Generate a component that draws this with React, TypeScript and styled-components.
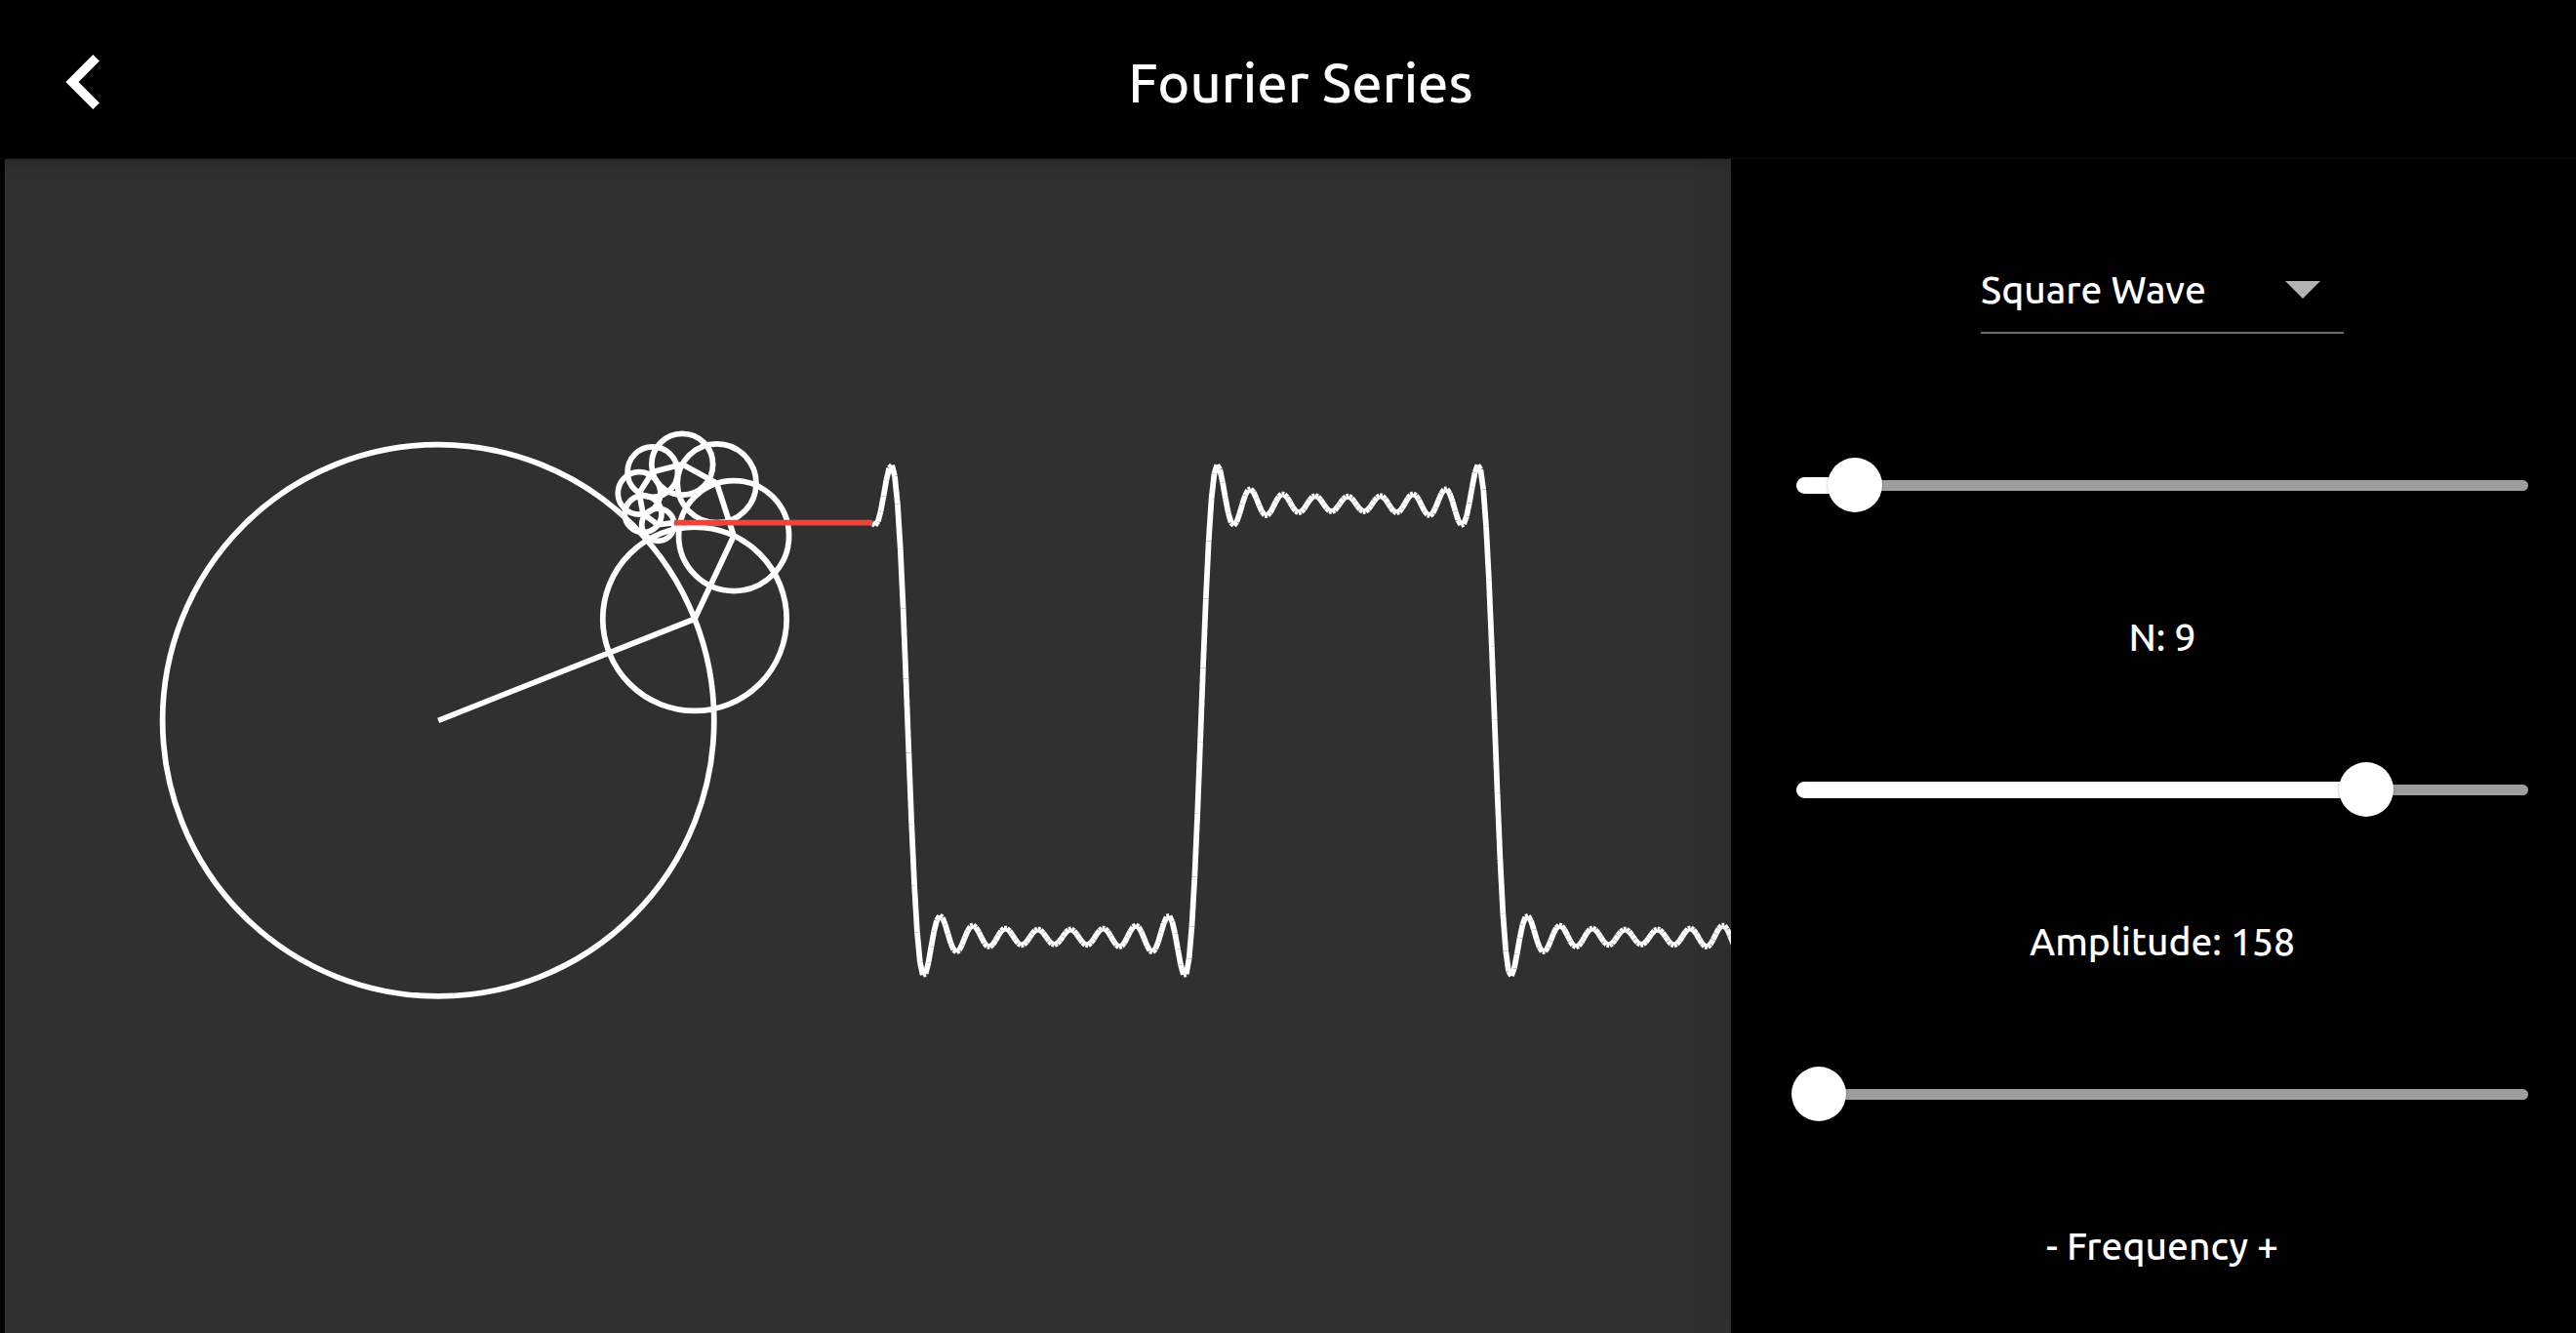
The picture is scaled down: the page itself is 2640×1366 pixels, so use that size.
import React, { useMemo, useState } from "react";
import styled, { createGlobalStyle } from "styled-components";

const GlobalStyle = createGlobalStyle`
  *, *::before, *::after { box-sizing: border-box; }
  body {
    margin: 0;
    background: #000;
    color: #fff;
    font-family: Ubuntu, "Noto Sans", sans-serif;
    font-weight: 500;
  }
`;

const Page = styled.div`
  display: flex;
  flex-direction: column;
  min-height: 100vh;
`;

const Header = styled.header`
  position: relative;
  z-index: 2;
  display: grid;
  grid-template-columns: 162px 1fr 136px;
  align-items: center;
  height: 163px;
  padding-top: 6px;
  border-bottom: 1px solid #0c0c0c;
  background: #000;
  box-shadow: 0 2px 16px rgba(0, 0, 0, 0.25);
`;

const BackButton = styled.button`
  display: grid;
  place-items: center;
  width: 112px;
  height: 112px;
  margin-left: 30px;
  padding: 0;
  border: 0;
  background: none;
  color: #fff;
  cursor: pointer;

  svg {
    width: 112px;
    height: 112px;
    fill: currentColor;
  }
`;

const Title = styled.h1`
  margin: 0;
  padding-top: 2px;
  font-size: 56px;
  font-weight: inherit;
  line-height: 64px;
  text-align: center;
`;

const Body = styled.main`
  display: grid;
  flex: 1;
  grid-template-columns: minmax(0, 1769fr) minmax(0, 866fr);
  padding-left: 5px;
`;

const Stage = styled.section`
  background: #303030;

  svg {
    display: block;
    width: 100%;
    height: auto;
  }
`;

const Panel = styled.aside`
  position: relative;
  display: flex;
  flex-direction: column;
  align-items: center;
  padding: 85px 0 0 18px;
  background: #000;
  box-shadow: 0 0 40px rgba(0, 0, 0, 0.12);
`;

const SelectBox = styled.div`
  display: grid;
  align-items: center;
  width: 372px;
  height: 94px;
  margin-bottom: 77px;
  padding-top: 4px;
  border-bottom: 2px solid #6e6e6e;

  > * {
    grid-area: 1 / 1;
  }

  svg {
    justify-self: end;
    width: 36px;
    height: 20px;
    margin-right: 24px;
    fill: #b3b3b3;
    pointer-events: none;
  }
`;

const Select = styled.select`
  width: 100%;
  height: 88px;
  padding: 0;
  border: 0;
  outline: 0;
  appearance: none;
  background: transparent;
  color: #fff;
  font: inherit;
  font-size: 39px;

  option {
    background: #000;
  }
`;

const Control = styled.div`
  display: grid;
  grid-template-rows: 156px 156px;
  align-items: center;
  width: 100%;
  max-width: 790px;
`;

const Label = styled.label`
  font-size: 39px;
  line-height: 48px;
  text-align: center;
`;

const SliderBox = styled.div`
  display: grid;
  align-items: center;

  > * {
    grid-area: 1 / 1;
  }
`;

const Rail = styled.span`
  height: 11px;
  margin: 0 20px;
  border-radius: 6px;
  background: #9e9e9e;
`;

const Fill = styled.span`
  height: 17px;
  margin-left: 20px;
  border-radius: 9px;
  background: #fff;
`;

const Range = styled.input`
  width: 100%;
  height: 56px;
  margin: 0;
  appearance: none;
  background: transparent;
  cursor: pointer;

  &::-webkit-slider-thumb {
    width: 56px;
    height: 56px;
    border: 0;
    border-radius: 50%;
    appearance: none;
    background: #fff;
    box-shadow: 0 0 3px rgba(0, 0, 0, 0.3);
  }
`;

interface SliderProps {
  id: string;
  label: string;
  min: number;
  max: number;
  step: number;
  value: number;
  onChange: (value: number) => void;
}

function Slider({ id, label, min, max, step, value, onChange }: SliderProps) {
  const ratio = (value - min) / (max - min);
  return (
    <Control>
      <SliderBox>
        <Rail />
        <Fill style={{ width: `calc((100% - 56px) * ${ratio} + 8px)` }} />
        <Range
          id={id}
          type="range"
          min={min}
          max={max}
          step={step}
          value={value}
          onChange={(e) => onChange(Number(e.target.value))}
        />
      </SliderBox>
      <Label htmlFor={id}>{label}</Label>
    </Control>
  );
}

const ORIGIN = { x: 444.2, y: 575.3 };
const WAVE_START = 889;
const STAGE = { width: 1769, height: 1203 };
const ANGLE = 0.377;
const ANGLE_STEP = 0.03;
const X_STEP = 2.8725;

type Shape = "square" | "sawtooth";

// Vector of the k-th harmonic at angle t.
function harmonic(shape: Shape, k: number, t: number, scale: number) {
  const n = shape === "square" ? 2 * k + 1 : k + 1;
  const r = scale / n;
  return { r, dx: r * Math.cos(n * t), dy: -r * Math.sin(n * t) };
}

interface PlotProps {
  shape: Shape;
  terms: number;
  amplitude: number;
}

function Plot({ shape, terms, amplitude }: PlotProps) {
  const scale = (amplitude * 282.6) / 158;

  const arms = useMemo(() => {
    let { x, y } = ORIGIN;
    return Array.from({ length: terms }, (_, k) => {
      const h = harmonic(shape, k, ANGLE, scale);
      const arm = { x, y, r: h.r, x2: x + h.dx, y2: y + h.dy };
      x = arm.x2;
      y = arm.y2;
      return arm;
    });
  }, [shape, terms, scale]);

  const wave = useMemo(() => {
    const count = Math.ceil((STAGE.width - WAVE_START) / X_STEP) + 2;
    return Array.from({ length: count }, (_, i) => {
      let y = ORIGIN.y;
      for (let k = 0; k < terms; k++) {
        y += harmonic(shape, k, ANGLE - i * ANGLE_STEP, scale).dy;
      }
      return { x: WAVE_START + i * X_STEP, y };
    });
  }, [shape, terms, scale]);

  const tip = arms[arms.length - 1];

  return (
    <svg viewBox={`0 0 ${STAGE.width} ${STAGE.height}`} role="img" aria-label="Fourier series">
      <g fill="none" stroke="#fff" strokeWidth="5.75">
        {arms.map((a, i) => (
          <g key={i}>
            <circle cx={a.x} cy={a.y} r={a.r} />
            <line x1={a.x} y1={a.y} x2={a.x2} y2={a.y2} />
          </g>
        ))}
        {wave.slice(1).map((p, i) => (
          <line key={i} x1={wave[i].x} y1={wave[i].y} x2={p.x} y2={p.y} />
        ))}
      </g>
      <line x1={tip.x2} y1={tip.y2} x2={WAVE_START} y2={tip.y2} stroke="#f44336" strokeWidth="5.75" />
    </svg>
  );
}

export default function App() {
  const [shape, setShape] = useState<Shape>("square");
  const [terms, setTerms] = useState(9);
  const [amplitude, setAmplitude] = useState(158);
  const [frequency, setFrequency] = useState(0.03);

  return (
    <>
      <GlobalStyle />
      <Page>
        <Header>
          <BackButton type="button" aria-label="Back">
            <svg viewBox="0 0 24 24" aria-hidden="true">
              <path d="M15.41 7.41 14 6l-6 6 6 6 1.41-1.41L10.83 12z" />
            </svg>
          </BackButton>
          <Title>Fourier Series</Title>
        </Header>
        <Body>
          <Stage>
            <Plot shape={shape} terms={terms} amplitude={amplitude} />
          </Stage>
          <Panel>
            <SelectBox>
              <Select
                aria-label="Wave"
                value={shape}
                onChange={(e) => setShape(e.target.value as Shape)}
              >
                <option value="square">Square Wave</option>
                <option value="sawtooth">Sawtooth Wave</option>
              </Select>
              <svg viewBox="0 0 36 20" aria-hidden="true">
                <path d="M0 2h36L18 20z" />
              </svg>
            </SelectBox>
            <Slider id="terms" label={`N: ${terms}`} min={2} max={100} step={1} value={terms} onChange={setTerms} />
            <Slider
              id="amplitude"
              label={`Amplitude: ${amplitude}`}
              min={5}
              max={200}
              step={1}
              value={amplitude}
              onChange={setAmplitude}
            />
            <Slider
              id="frequency"
              label="- Frequency +"
              min={0.01}
              max={1}
              step={0.01}
              value={frequency}
              onChange={setFrequency}
            />
          </Panel>
        </Body>
      </Page>
    </>
  );
}
